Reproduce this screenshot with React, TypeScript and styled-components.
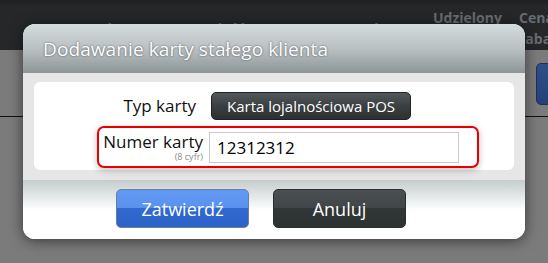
import React from "react";
import styled, { createGlobalStyle } from "styled-components";

const GlobalStyle = createGlobalStyle`
  html, body {
    margin: 0;
    padding: 0;
    width: 548px;
    height: 263px;
    overflow: hidden;
    background: #7b7b7b;
    font-family: "Open Sans", "Noto Sans", sans-serif;
  }
`;

const Page = styled.div`
  position: relative;
  width: 548px;
  height: 263px;
  overflow: hidden;
`;

const TopBar = styled.div`
  height: 50px;
  background: linear-gradient(#1f2021 0, #262729 6px, #262729 100%);
  display: flex;
  align-items: center;
  padding: 6px 0 0 85px;
  box-sizing: border-box;
  overflow: hidden;
`;

const HeadCell = styled.div<{ $w: number }>`
  width: ${(p) => p.$w}px;
  flex: none;
  color: #696c70;
  font-weight: 700;
  font-size: 14px;
  line-height: 21px;
  overflow: hidden;
`;

const Toolbar = styled.div`
  height: 67px;
  display: flex;
  justify-content: flex-end;
  align-items: flex-start;
  padding-top: 13px;
  box-sizing: border-box;
  border-bottom: 1px solid #111;
`;

const BlueTab = styled.div`
  width: 22px;
  height: 40px;
  margin-right: -12px;
  border-radius: 5px;
  background: linear-gradient(#2f4f86, #23427a);
  border: 1px solid #1d3055;
`;

const Dialog = styled.div`
  position: absolute;
  left: 23px;
  top: 24px;
  width: 502px;
  border-radius: 12px;
  overflow: hidden;
  box-shadow: 0 2px 14px rgba(0, 0, 0, 0.55);
  background: #fff;
`;

const Header = styled.div`
  height: 49px;
  background: linear-gradient(#d4dbdd, #b9c1c3 50%, #8d9597);
  padding-left: 20px;
  display: flex;
  align-items: center;
`;

const Title = styled.h1`
  margin: 0;
  font-weight: 400;
  font-size: 19px;
  letter-spacing: 0.1px;
  color: #fff;
  text-shadow: 0 0 2px rgba(40, 45, 48, 0.8);
`;

const Body = styled.div`
  background: #e6e6e6;
  padding: 9px 11px 10px;
`;

const Panel = styled.div`
  background: #fff;
  border-radius: 6px;
  padding: 10px 0 2px 63px;
  display: flex;
  flex-direction: column;
  gap: 6px;
`;

const Row = styled.div`
  display: flex;
  align-items: center;
`;

const Label = styled.div<{ $w: number; $gap: number }>`
  width: ${(p) => p.$w}px;
  margin-right: ${(p) => p.$gap}px;
  text-align: right;
  font-size: 17px;
  color: #111;
  line-height: 20px;
`;

const Hint = styled.div`
  font-size: 9px;
  line-height: 10px;
  color: #8a8a8a;
`;

const TypeButton = styled.button`
  height: 28px;
  padding: 0 15px;
  border: 1px solid #1f2222;
  border-radius: 5px;
  background: linear-gradient(#53585a, #3a3f41 50%, #2d3131);
  color: #fff;
  font-family: inherit;
  font-size: 15px;
`;

const Highlight = styled.div`
  width: 382px;
  height: 42px;
  box-sizing: border-box;
  border: 2px solid #e80000;
  border-radius: 7px;
  box-shadow: 0 2px 7px rgba(0, 0, 0, 0.25);
  display: flex;
  align-items: center;
`;

const Input = styled.input`
  width: 250px;
  height: 31px;
  box-sizing: border-box;
  border: 1px solid #cacaca;
  padding: 0 7px;
  font-family: inherit;
  font-size: 17px;
  color: #000;
  outline: none;
`;

const Footer = styled.div`
  background: linear-gradient(#c5cccc, #eef1f1 22px, #fff 30px);
  padding: 9px 0 11px 93px;
  display: flex;
  gap: 24px;
`;

const ActionButton = styled.button<{ $primary?: boolean }>`
  width: 133px;
  height: 39px;
  border-radius: 5px;
  font-family: inherit;
  font-size: 18px;
  color: #fff;
  border: 1px solid ${(p) => (p.$primary ? "#6d7d9c" : "#2a2e2e")};
  background: ${(p) =>
    p.$primary
      ? "linear-gradient(#619af3, #5a91ee 50%, #3169d0 50%, #2c63c8)"
      : "linear-gradient(#4b5053, #404548 50%, #313636 50%, #2d3232)"};
`;

export default function App() {
  return (
    <>
      <GlobalStyle />
      <Page>
        <TopBar>
          <HeadCell $w={65}>Kod</HeadCell>
          <HeadCell $w={63}>Stan</HeadCell>
          <HeadCell $w={47}>Ilość</HeadCell>
          <HeadCell $w={80}>Cena PLN</HeadCell>
          <HeadCell $w={93}>Stawka VAT</HeadCell>
          <HeadCell $w={86}>Udzielony rabat</HeadCell>
          <HeadCell $w={80}>Cena po rabacie</HeadCell>
        </TopBar>
        <Toolbar>
          <BlueTab />
        </Toolbar>
        <Dialog>
          <Header>
            <Title>Dodawanie karty stałego klienta</Title>
          </Header>
          <Body>
            <Panel>
              <Row>
                <Label $w={99} $gap={15}>Typ karty</Label>
                <TypeButton>Karta lojalnościowa POS</TypeButton>
              </Row>
              <Highlight>
                <Label $w={104} $gap={6}>
                  Numer karty
                  <Hint>(8 cyfr)</Hint>
                </Label>
                <Input defaultValue="12312312" />
              </Highlight>
            </Panel>
          </Body>
          <Footer>
            <ActionButton $primary>Zatwierdź</ActionButton>
            <ActionButton>Anuluj</ActionButton>
          </Footer>
        </Dialog>
      </Page>
    </>
  );
}
